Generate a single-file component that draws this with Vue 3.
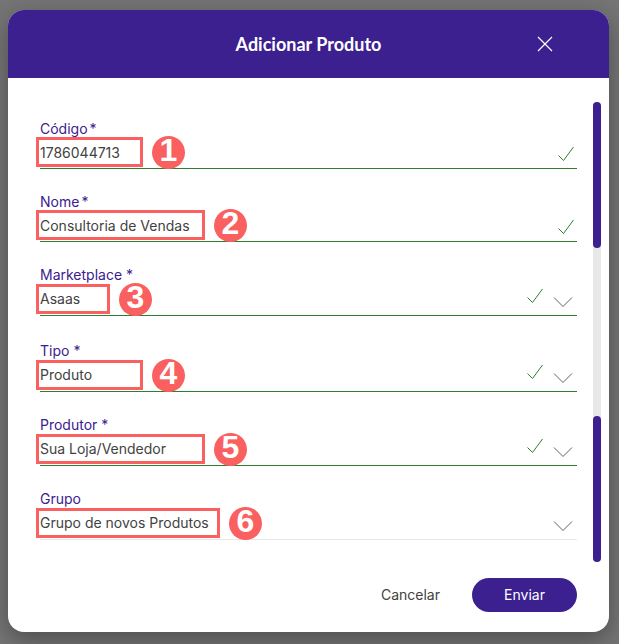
<script setup>
import { reactive } from 'vue'

const groups = reactive([
  [
    { id: 'codigo', label: 'Código', required: true, value: '1786044713', type: 'text', valid: true, mark: 107 },
    { id: 'nome', label: 'Nome', required: true, value: 'Consultoria de Vendas', type: 'text', valid: true, mark: 169 },
    { id: 'marketplace', label: 'Marketplace', required: true, value: 'Asaas', type: 'select', valid: true, mark: 74 },
  ],
  [
    { id: 'tipo', label: 'Tipo', required: true, value: 'Produto', type: 'select', valid: true, mark: 107 },
    { id: 'produtor', label: 'Produtor', required: true, value: 'Sua Loja/Vendedor', type: 'select', valid: true, mark: 169 },
    { id: 'grupo', label: 'Grupo', required: false, value: 'Grupo de novos Produtos', type: 'select', valid: false, mark: 184 },
  ],
])
</script>

<template>
  <div class="backdrop">
    <form class="modal" role="dialog" aria-labelledby="modal-title" @submit.prevent>
      <header class="header">
        <span></span>
        <h1 id="modal-title" class="title">Adicionar Produto</h1>
        <button class="close" type="button" aria-label="Fechar">
          <svg width="16" height="16" viewBox="0 0 16 16"><path d="M1 1 15 15M15 1 1 15" /></svg>
        </button>
      </header>

      <div class="body">
        <div class="groups">
          <div v-for="(group, g) in groups" :key="g" class="group">
            <div
              v-for="(field, i) in group"
              :key="field.id"
              class="field"
              :class="[field.type, { valid: field.valid }]"
            >
              <label class="label" :for="field.id">{{ field.label }}<span v-if="field.required" class="required">*</span></label>
              <div class="control">
                <input v-if="field.type === 'text'" :id="field.id" v-model="field.value" class="value" type="text" />
                <select v-else :id="field.id" v-model="field.value" class="value">
                  <option>{{ field.value }}</option>
                </select>
                <svg v-if="field.valid" class="check" width="18" height="16" viewBox="0 0 18 16">
                  <path d="M1.500 9.500 6.500 14.500 16.500 1" />
                </svg>
                <svg v-if="field.type === 'select'" class="chevron" width="20" height="12" viewBox="0 0 20 12">
                  <path d="M1 1.500 10 10.500 19 1.500" />
                </svg>
              </div>
              <div class="callout">
                <span class="frame" :style="{ width: field.mark + 'px' }"></span>
                <span class="badge">{{ g * 3 + i + 1 }}</span>
              </div>
            </div>
          </div>
        </div>
        <div class="track"><span class="thumb"></span><span class="thumb"></span></div>
      </div>

      <footer class="footer">
        <button class="cancel" type="button">Cancelar</button>
        <button class="submit" type="submit">Enviar</button>
      </footer>
    </form>
  </div>
</template>

<style>
body {
  margin: 0;
  background: #757575;
}
</style>

<style scoped>
* {
  box-sizing: border-box;
}
.backdrop {
  min-height: 100vh;
  padding: 10px 10px 12px 8px;
  background: #757575;
  font-family: Inter, "Liberation Sans", sans-serif;
  font-size: 14px;
  line-height: 20px;
  color: #424242;
}
.modal {
  border-radius: 16px;
  background: #fff;
  box-shadow: 0 8px 24px rgba(0, 0, 0, 0.34);
}
.header {
  display: grid;
  grid-template-columns: 32px 1fr 32px;
  align-items: center;
  height: 68px;
  padding: 0 48px;
  border-radius: 16px 16px 0 0;
  background: #3c208f;
  color: #fff;
}
.title {
  margin: 0;
  font-family: Lato, sans-serif;
  font-size: 18px;
  font-weight: 700;
  line-height: 24px;
  text-align: center;
}
button {
  border: 0;
  background: none;
  font: inherit;
  color: inherit;
  cursor: pointer;
}
.close {
  display: flex;
  padding: 8px;
}
svg {
  display: block;
  flex: none;
  fill: none;
  stroke: currentColor;
}
.close svg {
  stroke-width: 1.2;
}
.body {
  display: flex;
  gap: 16px;
  padding: 24px 8px 0 32px;
}
.groups {
  flex: 1;
  min-width: 0;
  display: grid;
  gap: 25px;
  align-content: start;
  padding: 17px 0 22px;
}
.group {
  display: grid;
  gap: 23px;
}
.field {
  position: relative;
  display: flex;
  flex-direction: column;
  height: 51px;
  border-bottom: 1px solid #e8e8e8;
}
.field.text {
  height: 50px;
}
.field.valid {
  border-bottom-color: #2e7d32;
}
.label {
  color: #3c208f;
}
.required {
  margin-left: 4px;
}
.text .required {
  margin-left: 2px;
}
.control {
  display: flex;
  align-items: center;
  gap: 9px;
  margin-top: 4px;
}
.value {
  flex: 1;
  min-width: 0;
  height: 20px;
  padding: 0;
  border: 0;
  outline: 0;
  appearance: none;
  background: none;
  font: inherit;
  color: inherit;
}
.check {
  color: #2e7d32;
}
.select .check {
  margin-top: -6px;
}
.text .check {
  margin-top: 2px;
  margin-right: 2px;
}
.chevron {
  margin-right: 4px;
  margin-top: 6px;
  color: #616161;
}
.callout {
  position: absolute;
  left: -4px;
  bottom: -1px;
  display: flex;
  align-items: flex-start;
  gap: 9px;
  pointer-events: none;
}
.frame {
  height: 30px;
  margin-top: 1px;
  border: 3px solid #fa6060;
}
.badge {
  width: 33px;
  height: 33px;
  border-radius: 50%;
  background: #fa6060;
  color: #fff;
  font: 700 32px/29px "Liberation Sans", sans-serif;
  text-align: center;
}
.track {
  display: flex;
  flex-direction: column;
  justify-content: space-between;
  width: 8px;
  border-radius: 4px;
  background: #e8e8e8;
}
.thumb {
  height: 146px;
  border-radius: 4px;
  background: #3c208f;
}
.footer {
  display: flex;
  justify-content: flex-end;
  gap: 16px;
  padding: 16px 32px 20px;
}
.cancel,
.submit {
  height: 34px;
  padding: 0 16px;
}
.submit {
  min-width: 105px;
  border-radius: 17px;
  background: #3c208f;
  color: #fff;
}
</style>
